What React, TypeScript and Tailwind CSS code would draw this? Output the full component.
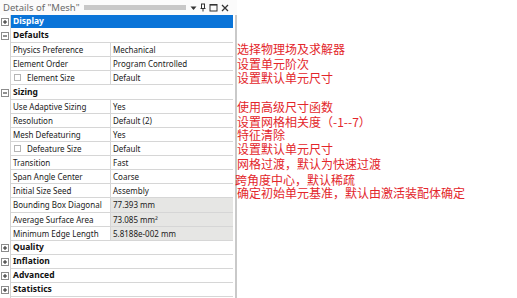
import React from "react";

type Row =
  | { kind: "section"; label: string; open: boolean; selected?: boolean; h?: number }
  | { kind: "prop"; label: string; value: string; check?: boolean; ro?: boolean; h?: number };

const rows: Row[] = [
  { kind: "section", label: "Display", open: false, selected: true },
  { kind: "section", label: "Defaults", open: true },
  { kind: "prop", label: "Physics Preference", value: "Mechanical" },
  { kind: "prop", label: "Element Order", value: "Program Controlled" },
  { kind: "prop", label: "Element Size", value: "Default", check: true },
  { kind: "section", label: "Sizing", open: true, h: 15 },
  { kind: "prop", label: "Use Adaptive Sizing", value: "Yes" },
  { kind: "prop", label: "Resolution", value: "Default (2)" },
  { kind: "prop", label: "Mesh Defeaturing", value: "Yes" },
  { kind: "prop", label: "Defeature Size", value: "Default", check: true },
  { kind: "prop", label: "Transition", value: "Fast" },
  { kind: "prop", label: "Span Angle Center", value: "Coarse" },
  { kind: "prop", label: "Initial Size Seed", value: "Assembly" },
  { kind: "prop", label: "Bounding Box Diagonal", value: "77.393 mm", ro: true, h: 15 },
  { kind: "prop", label: "Average Surface Area", value: "73.085 mm²", ro: true },
  { kind: "prop", label: "Minimum Edge Length", value: "5.8188e-002 mm", ro: true },
  { kind: "section", label: "Quality", open: false },
  { kind: "section", label: "Inflation", open: false },
  { kind: "section", label: "Advanced", open: false },
  { kind: "section", label: "Statistics", open: false },
];

const notes: { t: string; top: number; left: number }[] = [
  { t: "选择物理场及求解器", top: 43, left: 237 },
  { t: "设置单元阶次", top: 58, left: 237 },
  { t: "设置默认单元尺寸", top: 72, left: 237 },
  { t: "使用高级尺寸函数", top: 101, left: 237 },
  { t: "设置网格相关度（-1--7）", top: 116, left: 237 },
  { t: "特征清除", top: 129, left: 237 },
  { t: "设置默认单元尺寸", top: 143, left: 237 },
  { t: "网格过渡，默认为快速过渡", top: 158, left: 237 },
  { t: "跨角度中心，默认稀疏", top: 174, left: 235 },
  { t: "确定初始单元基准，默认由激活装配体确定", top: 187, left: 237 },
];

function ExpandBox({ open }: { open: boolean }) {
  return (
    <svg width="8" height="8" viewBox="0 0 8 8" className="block">
      <rect x="0.5" y="0.5" width="7" height="7" fill="#ffffff" stroke="#8c8c8c" />
      <line x1="2" y1="4" x2="6" y2="4" stroke="#222" strokeWidth="1" />
      {!open && <line x1="4" y1="2" x2="4" y2="6" stroke="#222" strokeWidth="1" />}
    </svg>
  );
}

export default function App() {
  return (
    <div
      className="relative w-[517px] h-[298px] bg-white overflow-hidden flex"
      style={{ fontFamily: '"Noto Sans", "Liberation Sans", sans-serif' }}
    >
      <div className="w-[237px] h-full flex flex-col">
        {/* header */}
        <div className="h-[15px] flex items-center pl-[3px] pr-[8px] bg-[#fbfbfb] shrink-0">
          <span className="text-[9.5px] leading-none text-[#6a6a6a] whitespace-nowrap">Details of "Mesh"</span>
          <div className="flex-1 mx-[4px] h-[5px] bg-[radial-gradient(#c4c4c4_0.7px,transparent_0.8px)] bg-[length:2px_2px]" />
          <div className="flex items-center gap-[3px]">
            <svg width="7" height="8" viewBox="0 0 7 8">
              <path d="M0.5 2.5 L6.5 2.5 L3.5 6 Z" fill="#333" />
            </svg>
            <svg width="6" height="9" viewBox="0 0 6 9">
              <path d="M1 1 H5 M1.5 1 V5.5 M4.5 1 V5.5 M0.5 5.5 H5.5 M3 5.5 V8.5" stroke="#333" strokeWidth="1" fill="none" />
            </svg>
            <svg width="9" height="9" viewBox="0 0 9 9">
              <rect x="1" y="1.5" width="7" height="6.5" fill="none" stroke="#333" strokeWidth="1" />
              <line x1="1" y1="2" x2="8" y2="2" stroke="#333" strokeWidth="1.2" />
            </svg>
            <svg width="8" height="8" viewBox="0 0 8 8">
              <path d="M1 1 L7 7 M7 1 L1 7" stroke="#333" strokeWidth="1.3" />
            </svg>
          </div>
        </div>
        {/* body */}
        <div className="flex-1 flex border-r-2 border-[#c9c9c9]">
          <div className="w-[11px] border-r border-[#d4d4d4] flex flex-col shrink-0">
            {rows.map((r, i) => (
              <div
                key={i}
                className="flex items-center justify-center pr-[1px]"
                style={{ height: r.h ?? 14 }}
              >
                {r.kind === "section" && <ExpandBox open={r.open} />}
              </div>
            ))}
          </div>
          <div className="w-[223px] flex flex-col pr-[1px]">
            {rows.map((r, i) =>
              r.kind === "section" ? (
                <div
                  key={i}
                  className={
                    "flex items-center border-b text-[8.5px] font-bold pl-[2px] " +
                    (r.selected
                      ? "bg-[#0a74d8] text-white border-white"
                      : "bg-white text-[#111] border-[#d6d6d6]")
                  }
                  style={{ height: r.h ?? 14 }}
                >
                  {r.label}
                </div>
              ) : (
                <div
                  key={i}
                  className="flex border-b border-[#d6d6d6] text-[8px] text-[#1a1a1a]"
                  style={{ height: r.h ?? 14 }}
                >
                  <div className="w-[100px] flex items-center pl-[2px] border-r border-[#d6d6d6] whitespace-nowrap">
                    {r.check && (
                      <span className="inline-block w-[7px] h-[7px] border border-[#b5b5b5] bg-white ml-[1px] mr-[6px]" />
                    )}
                    {r.label}
                  </div>
                  <div
                    className={
                      "flex-1 flex items-center pl-[2px] whitespace-nowrap " +
                      (r.ro ? "bg-[#e6e6e4]" : "bg-white")
                    }
                  >
                    {r.value}
                  </div>
                </div>
              )
            )}
          </div>
        </div>
      </div>
      {notes.map((n, i) => (
        <div
          key={i}
          className="absolute text-[12px] leading-[12px] text-[#e3262b] whitespace-nowrap"
          style={{
            top: n.top,
            left: n.left,
            fontFamily: '"Noto Sans CJK SC", sans-serif',
          }}
        >
          {n.t}
        </div>
      ))}
    </div>
  );
}
